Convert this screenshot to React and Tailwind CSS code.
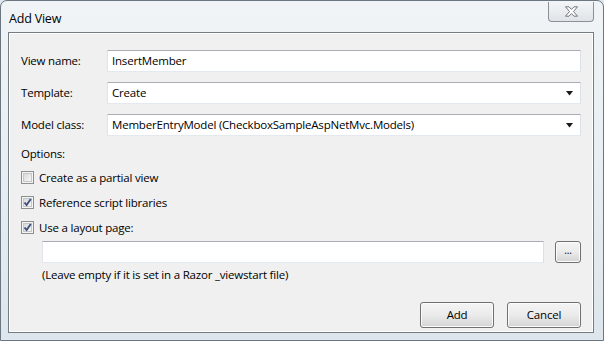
import React from "react";

const font = { fontFamily: '"Open Sans", "Noto Sans", sans-serif' };

function TextBox({ value, className = "", arrow = false }) {
  return (
    <div
      className={`flex h-[22px] items-center border border-[#abadb3] border-b-[#e3e9ef] border-l-[#e2e3ea] border-r-[#dbdfe6] bg-white pl-[4px] pr-[6px] text-black ${className}`}
    >
      <span className="flex-1 truncate">{value}</span>
      {arrow && (
        <svg width="8" height="5" viewBox="0 0 8 5">
          <path d="M0 0 H7 L3.5 4.5 Z" fill="#1a1a1a" />
        </svg>
      )}
    </div>
  );
}

function CheckBox({ checked, label }) {
  return (
    <div className="flex h-[25px] items-center gap-[5px]">
      <div className="flex h-[13px] w-[13px] items-center justify-center border border-[#8e8f8f] bg-[#f4f4f4]">
        <div className="flex h-[9px] w-[9px] items-center justify-center border border-[#c6c7c8] bg-gradient-to-br from-[#d9d9d9] to-[#f7f7f7]">
          {checked && (
            <svg width="9" height="9" viewBox="0 0 9 9" className="overflow-visible">
              <path
                d="M1.5 4.5 L3.6 7 L7.8 1"
                fill="none"
                stroke="#3c4f7d"
                strokeWidth="1.9"
              />
            </svg>
          )}
        </div>
      </div>
      <span className="text-black">{label}</span>
    </div>
  );
}

function WinButton({ children, className = "" }) {
  return (
    <button
      type="button"
      className={`flex items-center justify-center rounded-[3px] border border-[#707070] bg-gradient-to-b from-[#f4f4f4] via-[#ebebeb] to-[#d4d4d4] text-black shadow-[inset_0_0_0_1px_#fbfbfb] ${className}`}
    >
      {children}
    </button>
  );
}

export default function App() {
  return (
    <div
      className="h-[341px] w-[604px] overflow-hidden bg-[#dfe7ee] text-[11.5px] tracking-[-0.2px]"
      style={font}
    >
      <div className="flex h-[341px] w-[604px] flex-col rounded-t-[7px] border border-[#6b7680] bg-gradient-to-b from-[#f0f4f7] via-[#e8eef2] to-[#dde6ec] pb-[7px] pl-[7px] pr-[9px]">
        {/* title bar */}
        <div className="flex h-[31px] items-start">
          <div className="mt-[9px] flex-1 pl-[1px] text-[12.5px] text-black">Add View</div>
          <div className="mt-[1px] flex h-[20px] w-[46px] items-center justify-center rounded-b-[4px] border border-t-0 border-[#8a9199] bg-gradient-to-b from-[#f3f5f7] to-[#dfe4e8]">
            <svg width="15" height="11" viewBox="0 0 15 11">
              <path
                d="M1.5 0.8 H5 L7.5 3.4 L10 0.8 H13.5 L9.5 5.5 L13.5 10.2 H10 L7.5 7.6 L5 10.2 H1.5 L5.5 5.5 Z"
                fill="#ffffff"
                stroke="#6f767d"
                strokeWidth="1"
                strokeLinejoin="round"
              />
            </svg>
          </div>
        </div>

        {/* content panel */}
        <div className="flex flex-1 flex-col border border-[#727d86] bg-[#f0f0f0] pl-[12px] pr-[12px] pt-[17px] shadow-[inset_0_0_0_1px_#ffffff]">
          <div className="flex items-center">
            <span className="w-[86px] text-black">View name:</span>
            <TextBox value="InsertMember" className="flex-1" />
          </div>
          <div className="mt-[10px] flex items-center">
            <span className="w-[86px] text-black">Template:</span>
            <TextBox value="Create" arrow className="flex-1" />
          </div>
          <div className="mt-[10px] flex items-center">
            <span className="w-[86px] text-black">Model class:</span>
            <TextBox
              value="MemberEntryModel (CheckboxSampleAspNetMvc.Models)"
              arrow
              className="flex-1"
            />
          </div>

          <div className="mt-[9px] text-black">Options:</div>

          <div className="mt-[3px] flex flex-col">
            <CheckBox label="Create as a partial view" />
            <CheckBox checked label="Reference script libraries" />
            <CheckBox checked label="Use a layout page:" />
          </div>

          <div className="mt-[1px] flex items-center pl-[21px]">
            <TextBox value="" className="flex-1" />
            <WinButton className="ml-[11px] h-[22px] w-[26px] pb-[4px] text-[10px]">...</WinButton>
          </div>
          <div className="mt-[3px] pl-[21px] text-black">
            (Leave empty if it is set in a Razor _viewstart file)
          </div>

          <div className="mt-[18px] flex justify-end gap-[13px]">
            <WinButton className="h-[26px] w-[74px]">Add</WinButton>
            <WinButton className="h-[26px] w-[74px]">Cancel</WinButton>
          </div>
        </div>
      </div>
    </div>
  );
}
